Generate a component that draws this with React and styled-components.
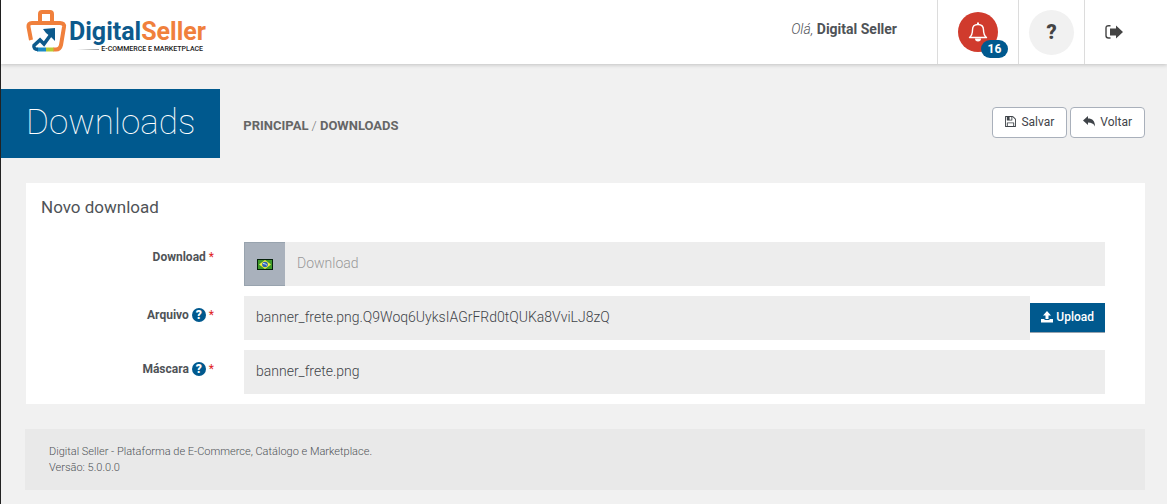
import React, { useState } from 'react';
import styled, { createGlobalStyle } from 'styled-components';

function LogoMark() {
  return (
    <svg width="42" height="44" viewBox="0 0 42 44" fill="none" aria-hidden="true">
      <path d="M14 16V5q0-2 2-2h8q2 0 2 2v11" stroke="#f0803c" strokeWidth="4" />
      <path d="M5 31L2.500 18Q2 14 6 14H34Q38.500 14 38 18L35 36Q34 40.500 30 40.500H27" stroke="#f0803c" strokeWidth="4" />
      <path d="M20 40.500h7.500" stroke="#b5cc34" strokeWidth="4" />
      <path d="M11 40.500h9" stroke="#1b8ac4" strokeWidth="4" />
      <path d="M12 40.500Q7 40 8 36.500L14 31L18 35L26 24" stroke="#0d5a8c" strokeWidth="3.500" />
      <path d="M17 20L29 19V32L25 28L20 24Z" fill="#0d5a8c" />
    </svg>
  );
}

function BellIcon() {
  return (
    <svg width="20" height="20" viewBox="0 0 20 20" fill="none" stroke="#fff" strokeWidth="1.400" aria-hidden="true">
      <path d="M1.500 15.500Q4.500 13 4.500 8Q4.500 2.500 10 2.500T15.500 8Q15.500 13 18.500 15.500Z" strokeLinejoin="round" />
      <path d="M10 0.500v2" strokeWidth="2" />
      <path d="M7 16.500a3 3 0 0 0 6 0z" fill="#fff" stroke="none" />
    </svg>
  );
}

function SignOutIcon() {
  return (
    <svg width="18" height="16" viewBox="0 0 18 16" fill="#444" aria-hidden="true">
      <path d="M5.500 1.700H3.500Q1 1.700 1 4V11.500Q1 14 3.500 14H5.500" fill="none" stroke="#444" strokeWidth="1.400" />
      <path d="M5 4.500h6V1.500L18 8l-7 6.500v-3H5z" />
    </svg>
  );
}

function SaveIcon() {
  return (
    <svg width="11" height="11" viewBox="0 0 1536 1536" fill="#3f4449" aria-hidden="true">
      <path d="M384 1408h768v-384H384zM1280 1408h128V512q0-14-10-38t-20-35l-281-281q-10-10-34-20t-39-10v416q0 40-28 68t-68 28H352q-40 0-68-28t-28-68V128H128v1280h128V992q0-40 28-68t68-28h832q40 0 68 28t28 68zM896 480V160q0-13-9-22t-23-10H672q-13 0-22 10t-10 22v320q0 13 10 22t22 10h192q13 0 23-10t9-22zM1536 512v928q0 40-28 68t-68 28H96q-40 0-68-28t-28-68V96q0-40 28-68T96 0h928q40 0 88 20t76 48l280 280q28 28 48 76t20 88z" />
    </svg>
  );
}

function ReplyIcon() {
  return (
    <svg width="12" height="11" viewBox="0 0 12 11" fill="#3f4449" aria-hidden="true">
      <path d="M0 4.500L5 0v2.500C9.500 2.500 12 5 12 10.500 10.500 7.500 8.500 6.500 5 6.500V9z" />
    </svg>
  );
}

function UploadIcon() {
  return (
    <svg width="12" height="12" viewBox="0 0 12 12" fill="#fff" aria-hidden="true">
      <path d="M6 0l4 4.500H7.500V8h-3V4.500H2z" />
      <path d="M0 8h3.500v1h5V8H12v3.500H0z" />
    </svg>
  );
}

function BrazilFlag() {
  return (
    <svg width="16" height="11" viewBox="0 0 16 11" aria-hidden="true">
      <path d="M0 0h16v11H0z" fill="#06210a" />
      <path d="M1 1h14v9H1z" fill="#3f9a2c" />
      <path d="M8 1l6 4.500L8 10 2 5.500z" fill="#f0ee3c" />
      <circle cx="8" cy="5.500" r="2.800" fill="#2b61b8" />
      <path d="M6 4.500q2.500 0 4 1.800" stroke="#d7e6f5" fill="none" />
    </svg>
  );
}

function Label({ id, text, help }) {
  return (
    <FieldLabel htmlFor={id} $help={help}>
      {text}
      {help && <Help>?</Help>}
      <Required>*</Required>
    </FieldLabel>
  );
}

function App() {
  const [name, setName] = useState('');
  const [file, setFile] = useState('banner_frete.png.Q9Woq6UyksIAGrFRd0tQUKa8VviLJ8zQ');
  const [mask, setMask] = useState('banner_frete.png');

  return (
    <Page>
      <GlobalStyle />
      <Header>
        <Logo href="#">
          <LogoMark />
          <LogoText>
            <LogoName>Digital<span>Seller</span></LogoName>
            <LogoTagline>E-COMMERCE E MARKETPLACE</LogoTagline>
          </LogoText>
        </Logo>
        <Greeting><em>Olá,</em> <strong>Digital Seller</strong></Greeting>
        <HeaderCell $width="81px">
          <BellButton aria-label="Notificações">
            <BellIcon />
            <Badge>16</Badge>
          </BellButton>
        </HeaderCell>
        <HeaderCell $width="66px">
          <HelpButton>?</HelpButton>
        </HeaderCell>
        <HeaderCell $width="83px">
          <ExitButton aria-label="Sair"><SignOutIcon /></ExitButton>
        </HeaderCell>
      </Header>

      <TitleBar>
        <Title>Downloads</Title>
        <Breadcrumb>
          <a href="#">PRINCIPAL</a> / <a href="#">DOWNLOADS</a>
        </Breadcrumb>
        <Actions>
          <ActionButton><SaveIcon />Salvar</ActionButton>
          <ActionButton><ReplyIcon />Voltar</ActionButton>
        </Actions>
      </TitleBar>

      <Panel>
        <PanelTitle>Novo download</PanelTitle>
        <Row>
          <Label id="name" text="Download" />
          <Group>
            <Addon><BrazilFlag /></Addon>
            <Input id="name" placeholder="Download" value={name} onChange={(e) => setName(e.target.value)} />
          </Group>
        </Row>
        <Row>
          <Label id="file" text="Arquivo" help />
          <Group>
            <Input id="file" value={file} onChange={(e) => setFile(e.target.value)} />
            <UploadButton><UploadIcon />Upload</UploadButton>
          </Group>
        </Row>
        <Row>
          <Label id="mask" text="Máscara" help />
          <Group>
            <Input id="mask" value={mask} onChange={(e) => setMask(e.target.value)} />
          </Group>
        </Row>
      </Panel>

      <Footer>
        <div>Digital Seller - Plataforma de E-Commerce, Catálogo e Marketplace.</div>
        <div>Versão: 5.0.0.0</div>
      </Footer>
    </Page>
  );
}

const GlobalStyle = createGlobalStyle`
* {
  box-sizing: border-box;
}
body {
  margin: 0;
  background: #f1f1f1;
  font-family: Roboto, "Liberation Sans", sans-serif;
  color: #4f5357;
}
button, input {
  font-family: inherit;
}
`

const Page = styled.div`
min-height: 100vh;
border-left: 1px solid #222;
`

const Header = styled.header`
display: flex;
align-items: stretch;
height: 64px;
background: #fff;
box-shadow: 0 1px 4px rgba(0, 0, 0, 0.2);
`

const Logo = styled.a`
display: flex;
align-items: flex-start;
gap: 1px;
padding: 9px 0 0 25px;
margin-right: auto;
text-decoration: none;
`

const LogoText = styled.div`
display: flex;
flex-direction: column;
padding-top: 10px;
`

const LogoName = styled.div`
font-size: 25px;
line-height: 25px;
font-weight: 700;
color: #0d5a8c;

span {
  color: #f0803c;
}
`

const LogoTagline = styled.div`
display: flex;
align-items: center;
gap: 2px;
padding-right: 3px;
font-size: 7px;
line-height: 10px;
font-weight: 500;
color: #222;
white-space: nowrap;

&::before {
  content: '';
  flex: 1;
  height: 1px;
  margin-left: 8px;
  background: linear-gradient(to right, #fff, #999);
}
`

const Greeting = styled.div`
padding: 19px 40px 0 0;
font-size: 14px;
line-height: 20px;

em {
  font-weight: 300;
}
strong {
  font-weight: 700;
}
`

const HeaderCell = styled.div`
display: flex;
align-items: center;
justify-content: center;
width: ${(props) => props.$width};
border-left: 1px solid #dcdcdc;
`

const BellButton = styled.button`
position: relative;
display: flex;
align-items: center;
justify-content: center;
width: 40px;
height: 40px;
padding: 0;
border: 0;
border-radius: 50%;
background: #d03b2d;
`

const Badge = styled.span`
position: absolute;
right: -10px;
bottom: -6px;
width: 27px;
border-radius: 9px;
background: #00598e;
color: #fff;
font-size: 12px;
line-height: 18px;
font-weight: 700;
text-align: center;
`

const HelpButton = styled.button`
width: 45px;
height: 45px;
padding: 0;
border: 0;
border-radius: 50%;
background: #f1f1f1;
color: #444;
font-size: 20px;
font-weight: 900;
`

const ExitButton = styled.button`
display: flex;
padding: 0 24px 0 0;
border: 0;
background: none;
`

const TitleBar = styled.div`
display: flex;
align-items: center;
margin: 25px 22px 0 0;
`

const Title = styled.h1`
margin: 0;
padding: 12px 25px 13px;
background: #00598e;
color: #fff;
font-size: 35px;
line-height: 44px;
font-weight: 100;
`

const Breadcrumb = styled.nav`
padding: 4px 0 0 23px;
font-size: 13px;
line-height: 16px;
font-weight: 300;
color: #777;

a {
  color: #666;
  font-weight: 700;
  text-decoration: none;
}
`

const Actions = styled.div`
display: flex;
gap: 3px;
margin-left: auto;
padding-bottom: 2px;
`

const ActionButton = styled.button`
display: flex;
align-items: center;
gap: 5px;
height: 31px;
padding: 0 12px 2px;
border: 1px solid #a9b0bb;
border-radius: 4px;
background: #fff;
color: #3f4449;
font-size: 12px;
`

const Panel = styled.main`
display: flex;
flex-direction: column;
gap: 10px;
margin: 25px 22px 0 25px;
padding: 13px 40px 10px 15px;
background: #fff;
`

const PanelTitle = styled.h2`
margin: 0 0 13px;
font-size: 17px;
line-height: 23px;
font-weight: 400;
`

const Row = styled.div`
display: flex;
align-items: flex-start;
`

const FieldLabel = styled.label`
display: flex;
align-items: center;
justify-content: flex-end;
gap: 3px;
flex: none;
width: 203px;
padding: ${(props) => (props.$help ? '12px' : '8px')} 30px 0 0;
font-size: 12px;
line-height: 14px;
font-weight: 700;
`

const Help = styled.span`
width: 14px;
border-radius: 50%;
background: #00598e;
color: #fff;
font-size: 12px;
line-height: 14px;
font-weight: 900;
text-align: center;
`

const Required = styled.span`
color: #e02222;
font-weight: 400;
`

const Group = styled.div`
display: flex;
flex: 1;
align-items: center;
`

const Addon = styled.span`
display: flex;
align-items: center;
justify-content: center;
width: 41px;
height: 44px;
border: 1px solid #98a3ae;
border-right: 0;
background: #a9b1bc;
`

const Input = styled.input`
flex: 1;
min-width: 0;
height: 44px;
padding: 0 12px 2px;
border: 0;
background: #ededed;
color: #3f4449;
font-size: 14px;
font-weight: 300;

&::placeholder {
  color: #999;
}
`

const UploadButton = styled.button`
display: flex;
align-items: center;
gap: 3px;
height: 30px;
padding: 0 11px 2px;
border: 0;
border-bottom: 1px solid #98a3ae;
background: #00598e;
color: #fff;
font-size: 12px;
font-weight: 500;
`

const Footer = styled.footer`
margin: 25px 22px 14px 24px;
padding: 15px 24px 14px;
background: #e9e9e9;
font-size: 11px;
line-height: 16px;
font-weight: 300;
`

export default App;
